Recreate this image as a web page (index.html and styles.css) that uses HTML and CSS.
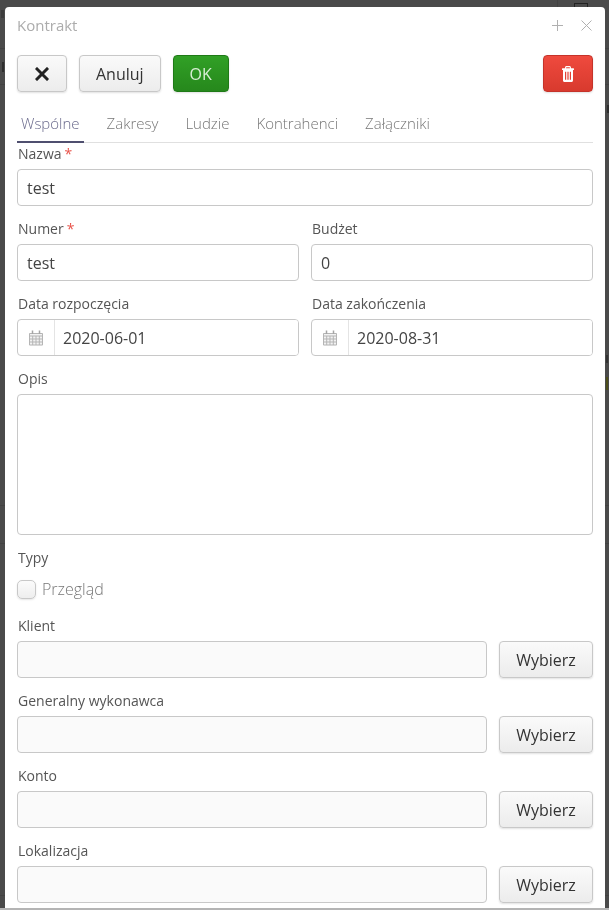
FILE: index.html
```html
<!DOCTYPE html>
<html lang="pl">
<head>
<meta charset="utf-8">
<title>Kontrakt</title>
<link rel="stylesheet" href="styles.css">
</head>
<body>
<div class="backdrop" aria-hidden="true">
  <span class="bg-line l1"></span><span class="bg-line l2"></span><span class="bg-line l3"></span><span class="bg-line l4"></span><span class="bg-line l5"></span>
  <span class="bg-vline"></span>
  <span class="bg-mark m1"></span><span class="bg-mark m2"></span><span class="bg-mark m3"></span><span class="bg-mark m4"></span><span class="bg-mark m5"></span>
  <span class="bg-doc"></span>
</div>
<main class="modal">
  <header class="modal-head">
    <h1 class="modal-title">Kontrakt</h1>
    <div class="win-icons">
      <svg class="win-icon" viewBox="0 0 11 11"><path d="M5.500 0V11M0 5.500H11"/></svg>
      <svg class="win-icon" viewBox="0 0 11 11"><path d="M.5.5 10.500 10.500M10.500.5 .5 10.500"/></svg>
    </div>
  </header>
  <div class="toolbar">
    <button class="btn btn-icon" type="button"><svg class="ico-x" viewBox="0 0 14 14"><path d="M2 2 12 12M12 2 2 12"/></svg></button>
    <button class="btn" type="button">Anuluj</button>
    <button class="btn btn-ok" type="button">OK</button>
    <button class="btn btn-del" type="button">
      <svg class="ico-trash" viewBox="0 0 12 14" preserveAspectRatio="none"><path fill-rule="evenodd" d="M4.200 0h3.600c.5 0 .9.3 1 .8l.3 1.200H11.500c.3 0 .5.2.5.5v.500c0 .3-.2.5-.5.5H11v9c0 .8-.5 1.500-1.200 1.500H2.200C1.500 14 1 13.300 1 12.500v-9H.5C.2 3.500 0 3.300 0 3v-.5c0-.3.2-.5.5-.5h2.400l.3-1.200c.1-.5.5-.8 1-.8zM4.300 1l-.3 1h4l-.3-1H4.300zM3 5v7h1.200V5H3zm2.400 0v7h1.200V5H5.400zM7.800 5v7H9V5H7.800z"/></svg>
    </button>
  </div>
  <nav class="tabs">
    <a class="tab active">Wspólne</a>
    <a class="tab">Zakresy</a>
    <a class="tab">Ludzie</a>
    <a class="tab">Kontrahenci</a>
    <a class="tab">Załączniki</a>
  </nav>
  <form class="form">
    <div class="field">
      <label class="label">Nazwa<span class="req">*</span></label>
      <input class="input" value="test">
    </div>
    <div class="row">
      <div class="field">
        <label class="label">Numer<span class="req">*</span></label>
        <input class="input" value="test">
      </div>
      <div class="field">
        <label class="label">Budżet</label>
        <input class="input" value="0">
      </div>
    </div>
    <div class="row">
      <div class="field">
        <label class="label">Data rozpoczęcia</label>
        <div class="date">
          <span class="date-addon"><svg class="ico-cal" viewBox="0 0 16 16"><use href="#cal"/></svg></span>
          <input class="date-input" value="2020-06-01">
        </div>
      </div>
      <div class="field">
        <label class="label">Data zakończenia</label>
        <div class="date">
          <span class="date-addon"><svg class="ico-cal" viewBox="0 0 16 16"><use href="#cal"/></svg></span>
          <input class="date-input" value="2020-08-31">
        </div>
      </div>
    </div>
    <div class="field">
      <label class="label">Opis</label>
      <textarea class="textarea"></textarea>
    </div>
    <div class="field">
      <label class="label">Typy</label>
      <label class="check"><span class="checkbox"></span><span class="check-text">Przegląd</span></label>
    </div>
    <div class="field">
      <label class="label">Klient</label>
      <div class="picker"><input class="input readonly" readonly><button class="btn btn-pick" type="button">Wybierz</button></div>
    </div>
    <div class="field">
      <label class="label">Generalny wykonawca</label>
      <div class="picker"><input class="input readonly" readonly><button class="btn btn-pick" type="button">Wybierz</button></div>
    </div>
    <div class="field">
      <label class="label">Konto</label>
      <div class="picker"><input class="input readonly" readonly><button class="btn btn-pick" type="button">Wybierz</button></div>
    </div>
    <div class="field">
      <label class="label">Lokalizacja</label>
      <div class="picker"><input class="input readonly" readonly><button class="btn btn-pick" type="button">Wybierz</button></div>
    </div>
  </form>
</main>
<div class="page-strip"></div>
<svg class="defs" aria-hidden="true"><defs>
  <g id="cal">
    <path class="cal-fill" d="M1 3h14v12.500H1z"/>
    <path class="cal-lines" d="M1.500 3.500h13v11.500h-13zM1.500 6h13M1.500 9h13M1.500 12h13M4.700 6v9M8 6v9M11.300 6v9"/>
    <path class="cal-rings" d="M4.500 .5v3.500M11.500 .5v3.500"/>
  </g>
</defs></svg>
</body>
</html>
```
FILE: styles.css
```css
* { box-sizing: border-box; }
html, body { height: 100%; }
body {
  margin: 0;
  background: #4a4a4a;
  font-family: "Open Sans", "Liberation Sans", sans-serif;
  font-size: 14px;
  color: #555;
  overflow: hidden;
  position: relative;
}
.defs { width: 0; height: 0; position: absolute; }

.backdrop { position: absolute; inset: 0; overflow: hidden; }
.bg-line { position: absolute; left: 0; right: 0; height: 1px; background: #424242; }
.l1 { top: 48px; } .l2 { top: 84px; } .l3 { top: 505px; } .l4 { top: 543px; } .l5 { top: 895px; }
.bg-vline { position: absolute; left: 557px; top: 0; width: 1px; height: 7px; background: #424242; }
.bg-mark { position: absolute; width: 2px; background: #2e2e2e; }
.m1 { left: 2px; top: 62px; height: 10px; }
.m2 { left: 607px; top: 105px; height: 8px; }
.m3 { left: 606px; top: 355px; height: 8px; background: #333; }
.m4 { left: 606px; top: 377px; height: 13px; background: #4e4f1c; }
.m5 { left: 1px; top: 10px; width: 3px; height: 8px; background: #3c3c3c; }
.bg-doc { position: absolute; left: 574px; top: 3px; width: 14px; height: 8px; border: 1px solid #222; }

.modal {
  position: relative;
  margin: 7px 0 0 5px;
  width: 600px;
  height: 901px;
  background: #fff;
  border-radius: 4px 4px 0 0;
  padding: 0 12px;
  overflow: hidden;
  will-change: transform;
}
.page-strip { position: absolute; left: 0; right: 0; bottom: 0; height: 2px; background: #b4b4b4; }

.modal-head { height: 48px; display: flex; align-items: flex-start; justify-content: space-between; padding-top: 8px; }
.modal-title { margin: 0; font-size: 15px; font-weight: 400; line-height: 20px; color: #acacac; }
.win-icons { display: flex; gap: 18px; margin: 5px 1px 0 0; }
.win-icon { width: 11px; height: 11px; fill: none; stroke: #b0b0b0; stroke-width: 1; }

.toolbar { display: flex; gap: 12px; height: 37px; }
.btn {
  height: 37px;
  padding: 0 16px;
  font: 400 16px "Open Sans", "Liberation Sans", sans-serif;
  color: #333;
  background: linear-gradient(#fafafa, #ececec);
  border: 1px solid #c8c8c8;
  border-radius: 4px;
  box-shadow: 0 1px 2px rgba(0,0,0,.12);
  display: inline-flex;
  align-items: center;
  justify-content: center;
}
.btn-icon { width: 50px; padding: 0; }
.ico-x { width: 14px; height: 14px; fill: none; stroke: #222; stroke-width: 3; stroke-linecap: square; }
.btn-ok { width: 56px; color: #d9eed6; background: linear-gradient(#31a026, #26881c); border-color: #1f7a17; }
.btn-del { width: 50px; padding: 0; margin-left: auto; background: linear-gradient(#ef4a3e, #d83a2e); border-color: #c5332a; }
.ico-trash { width: 12px; height: 16px; fill: #fff; }

.tabs { display: flex; height: 51px; padding-top: 12px; border-bottom: 1px solid #e0e0e0; }
.tab { padding: 12px 0 0; height: 39px; margin-right: 27px; font-size: 15px; font-weight: 300; line-height: 15px; color: #777; border-bottom: 2px solid transparent; }
.tab:first-child { padding: 12px 4px 0; margin-right: 23px; }
.tab.active { color: #6a6a8c; border-bottom-color: #4f4f6f; }

.form { display: flex; flex-direction: column; gap: 12px; }
.row { display: grid; grid-template-columns: 1fr 1fr; gap: 12px; }
.field { display: flex; flex-direction: column; min-width: 0; }
.label { height: 26px; padding: 1px 0 5px 1px; line-height: 20px; font-size: 14px; color: #555; }
.req { color: #e8534a; margin-left: 3px; }

.input, .date-input, .textarea {
  font: 400 16px "Open Sans", "Liberation Sans", sans-serif;
  color: #444;
  outline: none;
}
.input { width: 100%; height: 37px; padding: 0 9px; background: #fff; border: 1px solid #c8c8c8; border-radius: 4px; }
.input.readonly { background: #fafafa; }
.textarea { display: block; width: 100%; height: 141px; padding: 8px 9px; border: 1px solid #c8c8c8; border-radius: 4px; resize: none; }

.date { display: flex; height: 37px; border: 1px solid #c8c8c8; border-radius: 4px; overflow: hidden; }
.date-addon { flex: 0 0 37px; display: flex; align-items: center; justify-content: center; border-right: 1px solid #e4e4e4; }
.date-input { flex: 1; min-width: 0; border: 0; padding: 0 8px; }
.ico-cal { width: 16px; height: 16px; }
.cal-fill { fill: #f2f2f2; }
.cal-lines { fill: none; stroke: #b5b5b5; stroke-width: 1; }
.cal-rings { fill: none; stroke: #a5a5a5; stroke-width: 1.500; }

.check { display: flex; align-items: center; gap: 6px; margin-top: 6px; height: 20px; }
.checkbox { width: 19px; height: 19px; background: linear-gradient(#fbfbfb, #eee); border: 1px solid #c8c8c8; border-radius: 5px; box-shadow: 0 1px 2px rgba(0,0,0,.1); }
.check-text { font-size: 16px; font-weight: 300; color: #777; }

.picker { display: grid; grid-template-columns: 1fr 94px; gap: 12px; }
.btn-pick { width: 94px; padding: 0; }
.field:has(.check) + .field { margin-top: 4px; }
```
